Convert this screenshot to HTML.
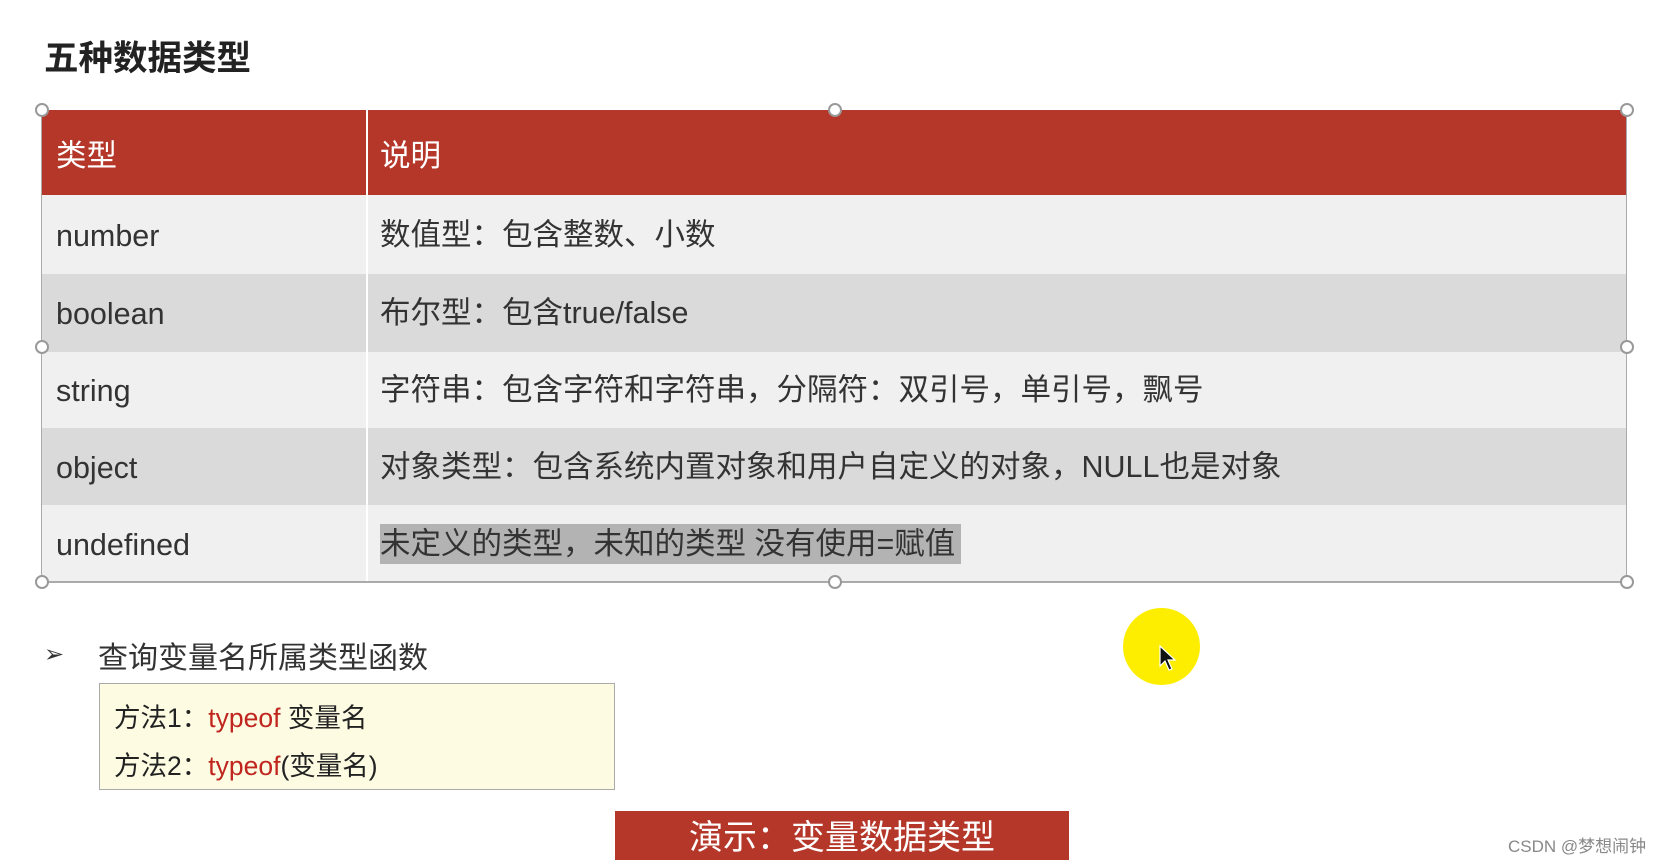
<!DOCTYPE html>
<html><head><meta charset="utf-8"><style>
*{margin:0;padding:0;box-sizing:border-box}
body{width:1656px;height:860px;background:#fff;position:relative;overflow:hidden;font-family:"Liberation Sans","Noto Sans CJK SC",sans-serif;color:#222}
.abs{position:absolute}
.title{left:44px;top:30px;font-size:34.5px;font-weight:bold;color:#222}
.row{position:absolute;left:42px;width:1585px;font-size:30.5px;color:#333}
.row div{position:absolute;top:0;height:100%;display:flex;align-items:center;line-height:40px}
.c1{left:14px;padding-top:2px}.c2{left:338px}
.div{position:absolute;left:366px;top:110px;width:2px;height:472px;background:#fff}
.h{position:absolute;width:14px;height:14px;border:2px solid #999;border-radius:50%;background:#fff}
</style></head><body>
<div class="abs title">五种数据类型</div>
<div class="row" style="top:110px;height:85px;background:#b5372a;color:#fff"><div class="c1" style="padding-top:6px">类型</div><div class="c2" style="padding-top:6px">说明</div></div>
<div class="row" style="top:195px;height:79px;background:#f0f0f0"><div class="c1">number</div><div class="c2">数值型：包含整数、小数</div></div>
<div class="row" style="top:274px;height:78px;background:#dadada"><div class="c1">boolean</div><div class="c2">布尔型：包含true/false</div></div>
<div class="row" style="top:352px;height:76px;background:#f0f0f0"><div class="c1">string</div><div class="c2">字符串：包含字符和字符串，分隔符：双引号，单引号，飘号</div></div>
<div class="row" style="top:428px;height:77px;background:#dadada"><div class="c1">object</div><div class="c2">对象类型：包含系统内置对象和用户自定义的对象，NULL也是对象</div></div>
<div class="row" style="top:505px;height:77px;background:#f0f0f0"><div class="c1">undefined</div><div class="c2"><span style="background:#b3b3b3;padding:0 6px 0 0">未定义的类型，未知的类型 没有使用=赋值</span></div></div>
<div class="div"></div>
<div class="abs" style="left:41px;top:110px;width:1px;height:472px;background:#aaa"></div>
<div class="abs" style="left:1626px;top:110px;width:1px;height:472px;background:#aaa"></div>
<div class="abs" style="left:42px;top:581px;width:1585px;height:2px;background:#aaa"></div>
<div class="h" style="left:35px;top:103px"></div><div class="h" style="left:828px;top:103px"></div><div class="h" style="left:1620px;top:103px"></div>
<div class="h" style="left:35px;top:340px"></div><div class="h" style="left:1620px;top:340px"></div>
<div class="h" style="left:35px;top:575px"></div><div class="h" style="left:828px;top:575px"></div><div class="h" style="left:1620px;top:575px"></div>
<div class="abs" style="left:44px;top:640px;font-size:24px;color:#333">➢</div>
<div class="abs" style="left:98px;top:633px;font-size:30px;color:#333">查询变量名所属类型函数</div>
<div class="abs" style="left:99px;top:683px;width:516px;height:107px;background:#fdfce3;border:1px solid #aaa;font-size:26.5px;color:#222;padding:10px 0 0 14px;line-height:48px">
<div>方法1：<span style="color:#c0251e">typeof</span> 变量名</div>
<div>方法2：<span style="color:#c0251e">typeof</span>(变量名)</div>
</div>
<div class="abs" style="left:615px;top:811px;width:454px;height:49px;background:#b5372a;color:#fff;font-size:34px;text-align:center;line-height:54px">演示：变量数据类型</div>
<div class="abs" style="left:1123px;top:608px;width:77px;height:77px;border-radius:50%;background:#fdee00"></div>
<svg class="abs" style="left:1158px;top:644px" width="20" height="28" viewBox="0 0 20 28"><path d="M2 2 L2 22 L7 17 L11 26 L14 25 L10 16 L17 16 Z" fill="#111" stroke="#fff" stroke-width="1.2"/></svg>
<div class="abs" style="left:1508px;top:832px;font-size:17px;color:#888">CSDN @梦想闹钟</div>
</body></html>
